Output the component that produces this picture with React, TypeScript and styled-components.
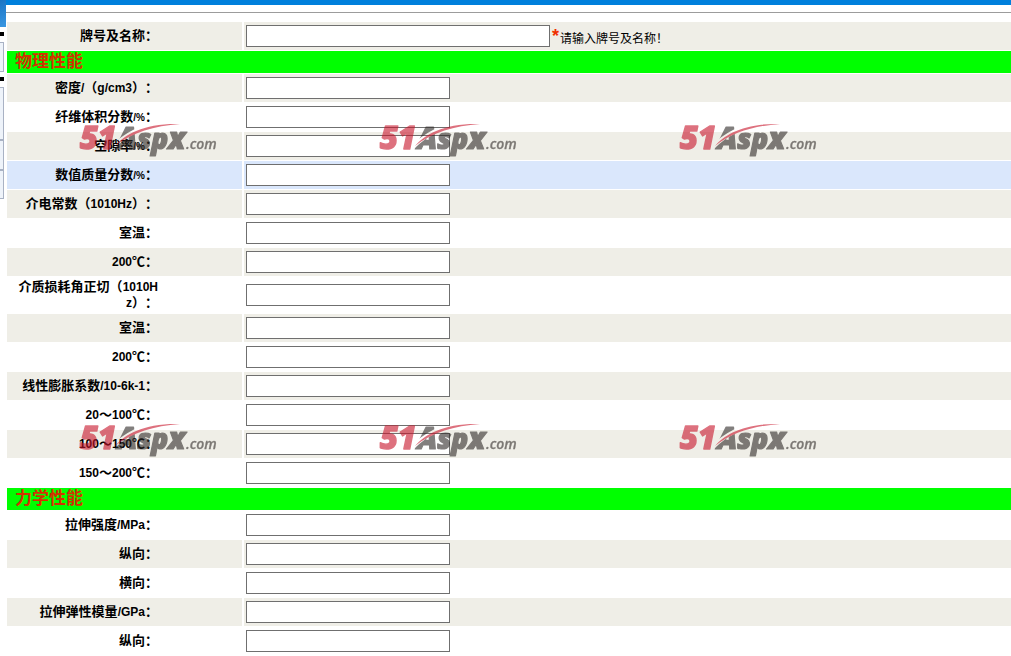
import React from 'react';
import styled, { createGlobalStyle } from 'styled-components';

const GlobalStyle = createGlobalStyle`
  * { box-sizing: border-box; }
  body {
    margin: 0;
    overflow: hidden;
    background: #fff;
    color: #000;
    font-family: "Liberation Sans", "Noto Sans CJK SC", sans-serif;
    font-size: 12px;
    text-spacing-trim: space-all;
  }
`;

const Page = styled.div`
  position: relative;
  display: flex;
  align-items: flex-start;
`;

const Rail = styled.aside`
  flex: 0 0 6px;
  display: flex;
  flex-direction: column;
  align-items: flex-start;
`;

const RailHeader = styled.div`
  width: 6px;
  height: 27px;
  background: linear-gradient(160deg, #1a74c4, #3a97e2);
`;

const RailMark = styled.div`
  width: 4px;
  height: 4px;
  margin: 5px 0 6px;
  background: #000;
`;

const RailBox = styled.div<{ $height: number }>`
  width: 4px;
  height: ${(p) => p.$height}px;
  border: 1px solid #a9b2c4;
  border-left: 0;
  background: #eef3fa;
`;

const Content = styled.main`
  flex: 1;
  min-width: 0;
`;

const TopBar = styled.div`
  height: 5px;
  background: #0080dc;
`;

const Rule = styled.hr`
  height: 1px;
  margin: 7px 0 9px;
  border: 0;
  background: #9c9c9c;
`;

const Form = styled.form`
  display: flex;
  flex-direction: column;
  gap: 1px;
  padding-left: 1px;
`;

type Tone = 'plain' | 'shaded' | 'active';
const tones: Record<Tone, string> = { plain: '#fff', shaded: '#efeee7', active: '#dae7fc' };

const Row = styled.div<{ $tone: Tone }>`
  display: grid;
  grid-template-columns: 235px minmax(0, 1fr);
  column-gap: 2px;
  min-height: 28px;

  & > * { background: ${(p) => tones[p.$tone]}; }
`;

const LabelCell = styled.div`
  display: flex;
  align-items: center;
  justify-content: flex-end;
  padding: 2px 84px 2px 9px;
`;

const Label = styled.label`
  font-size: 13px;
  font-weight: 700;
  line-height: 16px;
  text-align: right;
  word-break: break-all;
`;

const Latin = styled.span`
  font-size: 12px;
`;

const Percent = styled.span`
  font-size: 10px;
`;

const FieldCell = styled.div`
  display: flex;
  align-items: center;
  padding-left: 2px;
`;

const TextInput = styled.input<{ $wide?: boolean }>`
  width: ${(p) => (p.$wide ? 304 : 204)}px;
  height: 22px;
  padding: 1px 3px;
  border: 1px solid #6f6f6f;
  border-radius: 0;
  background: #fff;
  font: inherit;
  outline: 0;
`;

const Required = styled.span`
  align-self: flex-start;
  padding: 4px 1px 0 2px;
  color: #f03000;
  font-size: 18px;
  font-weight: 700;
  line-height: 20px;
`;

const Hint = styled.span`
  padding-top: 6px;
  line-height: 16px;
`;

const SectionTitle = styled.h2`
  height: 22px;
  margin: 0;
  padding-left: 8px;
  background: #0f0;
  color: #d23200;
  font-size: 17px;
  font-weight: 700;
  line-height: 22px;
`;

const WatermarkLayer = styled.div`
  position: absolute;
  inset: 0;
  display: grid;
  grid-template-columns: repeat(auto-fill, 300px);
  grid-auto-rows: 300px;
  padding: 120px 0 0 79px;
  pointer-events: none;
`;

const Mark = styled.svg`
  width: 144px;
  height: 36px;
  overflow: visible;
  opacity: 0.6;
  font-family: "Open Sans", "Noto Sans", sans-serif;
`;

function Watermark({ id }: { id: string }) {
  return (
    <Mark viewBox="0 0 144 36" aria-hidden="true">
      <mask id={id} maskUnits="userSpaceOnUse" x="-10" y="-20" width="170" height="80">
        <rect x="-10" y="-20" width="170" height="80" fill="#fff" />
        <path d="M34 27 C46 15 60 7 80 4" fill="none" stroke="#000" strokeWidth="4" />
      </mask>
      <g fontWeight="800" fontStyle="italic" strokeLinejoin="round">
        <text x="1" y="29" fontSize="31" fill="#c8142a" stroke="#c8142a" strokeWidth="1.4">51</text>
        <text x="38" y="29" fontSize="30" fill="#302b29" stroke="#302b29" strokeWidth="1.2" mask={`url(#${id})`}>
          A<tspan fontSize="28">sp</tspan>x
        </text>
      </g>
      <text x="107" y="29" fontSize="14" fontWeight="600" fontStyle="italic" fill="#302b29" stroke="#302b29" strokeWidth="0.3">.com</text>
      <path d="M36 26 C46 14 66 3 101 4 C75 6 54 12 36 26 Z" fill="#c8142a" />
    </Mark>
  );
}

type Entry = { id: string; label: React.ReactNode; tone: Tone };

const physical: Entry[] = [
  { id: 'density', label: <>密度<Latin>/</Latin>（<Latin>g/cm3</Latin>）：</>, tone: 'shaded' },
  { id: 'fiber', label: <>纤维体积分数<Percent>/%</Percent>：</>, tone: 'plain' },
  { id: 'void', label: <>空隙率<Percent>/%</Percent>：</>, tone: 'shaded' },
  { id: 'mass', label: <>数值质量分数<Percent>/%</Percent>：</>, tone: 'active' },
  { id: 'dielectric', label: <>介电常数（<Latin>1010Hz</Latin>）：</>, tone: 'shaded' },
  { id: 'dielectric-room', label: <>室温：</>, tone: 'plain' },
  { id: 'dielectric-200', label: <><Latin>200</Latin>℃：</>, tone: 'shaded' },
  { id: 'loss', label: <>介质损耗角正切（<Latin>1010Hz</Latin>）：</>, tone: 'plain' },
  { id: 'loss-room', label: <>室温：</>, tone: 'shaded' },
  { id: 'loss-200', label: <><Latin>200</Latin>℃：</>, tone: 'plain' },
  { id: 'expansion', label: <>线性膨胀系数<Latin>/10-6k-1</Latin>：</>, tone: 'shaded' },
  { id: 'expansion-20', label: <><Latin>20</Latin>～<Latin>100</Latin>℃：</>, tone: 'plain' },
  { id: 'expansion-100', label: <><Latin>100</Latin>～<Latin>150</Latin>℃：</>, tone: 'shaded' },
  { id: 'expansion-150', label: <><Latin>150</Latin>～<Latin>200</Latin>℃：</>, tone: 'plain' },
];

const mechanical: Entry[] = [
  { id: 'tensile', label: <>拉伸强度<Latin>/MPa</Latin>：</>, tone: 'plain' },
  { id: 'tensile-long', label: <>纵向：</>, tone: 'shaded' },
  { id: 'tensile-trans', label: <>横向：</>, tone: 'plain' },
  { id: 'modulus', label: <>拉伸弹性模量<Latin>/GPa</Latin>：</>, tone: 'shaded' },
  { id: 'modulus-long', label: <>纵向：</>, tone: 'plain' },
];

function FieldRow({ id, label, tone, wide, children }: Entry & { wide?: boolean; children?: React.ReactNode }) {
  return (
    <Row $tone={tone}>
      <LabelCell><Label htmlFor={id}>{label}</Label></LabelCell>
      <FieldCell>
        <TextInput id={id} name={id} type="text" $wide={wide} />
        {children}
      </FieldCell>
    </Row>
  );
}

export default function App() {
  return (
    <Page lang="zh-CN">
      <GlobalStyle />
      <Rail>
        <RailHeader />
        <RailMark />
        <RailBox $height={30} />
        <RailMark />
        <RailBox $height={53} />
        <RailBox $height={30} />
        <RailBox $height={29} />
      </Rail>
      <Content>
        <TopBar />
        <Rule />
        <Form>
          <FieldRow id="grade" label="牌号及名称：" tone="shaded" wide>
            <Required>*</Required>
            <Hint>请输入牌号及名称！</Hint>
          </FieldRow>
          <SectionTitle>物理性能</SectionTitle>
          {physical.map((e) => <FieldRow key={e.id} {...e} />)}
          <SectionTitle>力学性能</SectionTitle>
          {mechanical.map((e) => <FieldRow key={e.id} {...e} />)}
        </Form>
      </Content>
      <WatermarkLayer>
        {Array.from({ length: 6 }, (_, i) => <Watermark key={i} id={`swoosh-gap-${i}`} />)}
      </WatermarkLayer>
    </Page>
  );
}
